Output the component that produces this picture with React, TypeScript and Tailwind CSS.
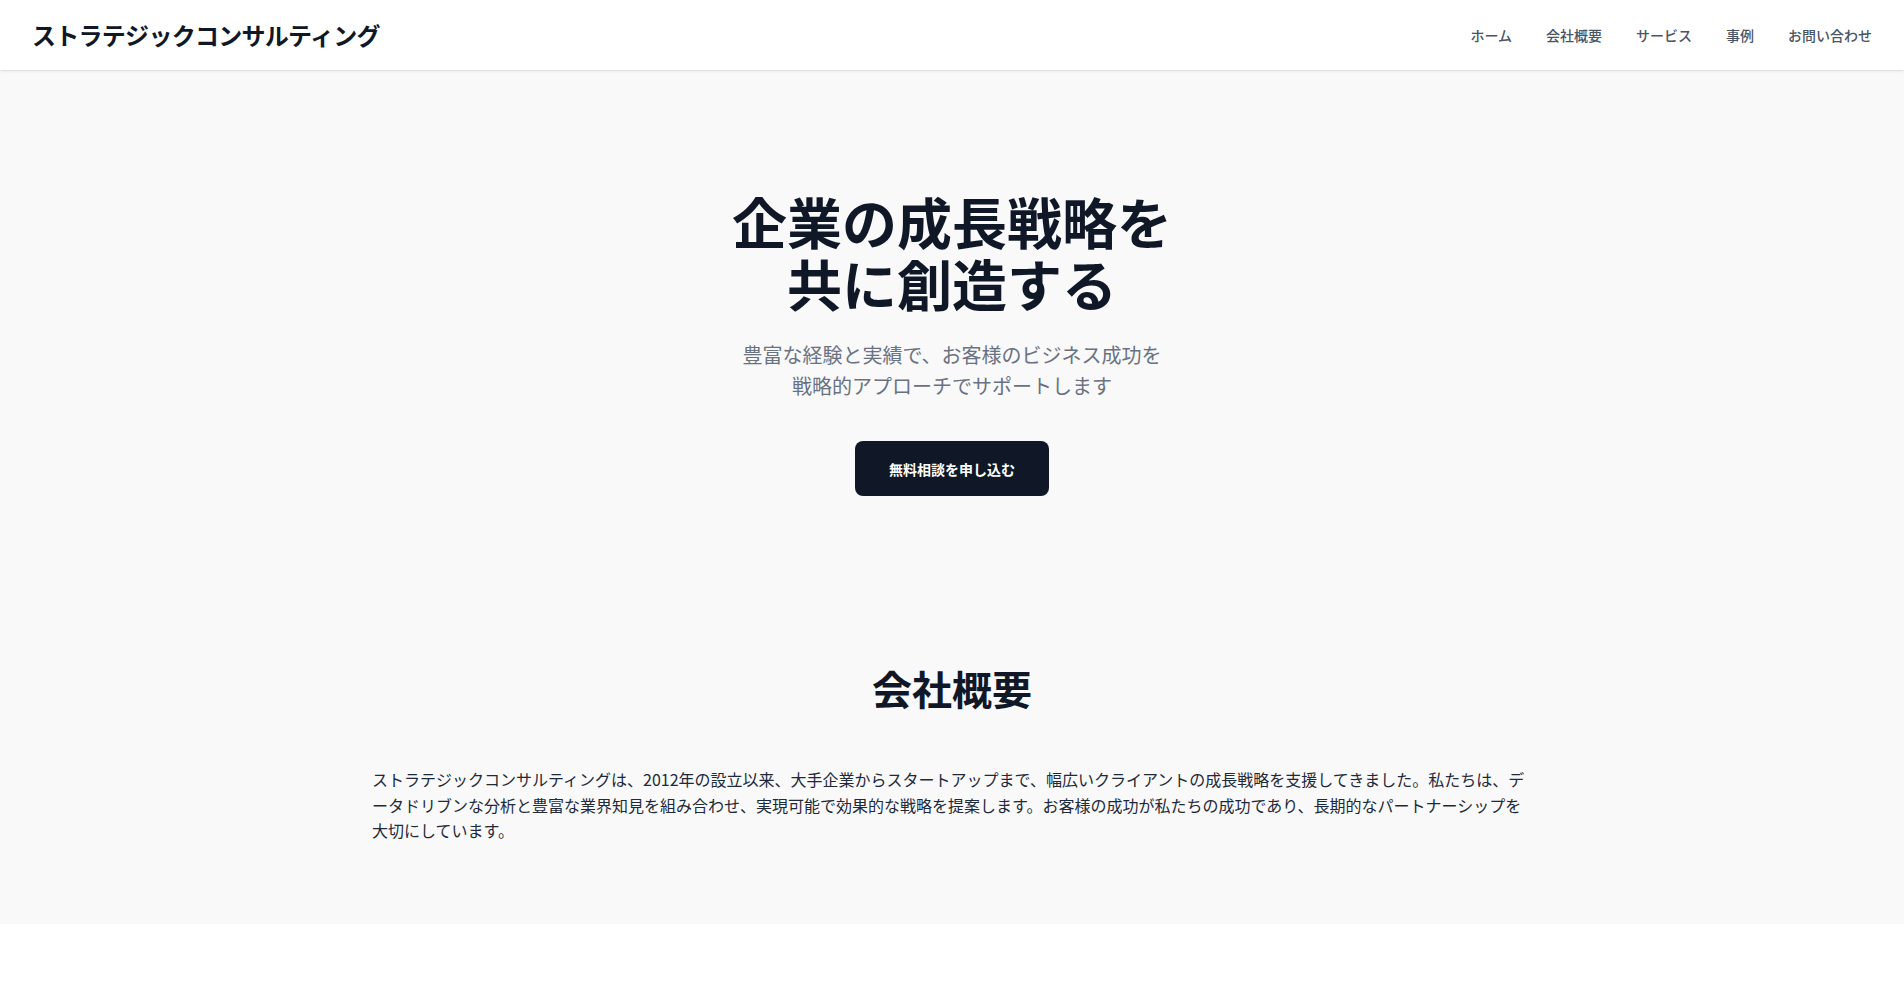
const navItems = ["ホーム", "会社概要", "サービス", "事例", "お問い合わせ"];

const Header = () => {
  return (
    <header className="bg-white shadow-sm relative z-10">
      <div className="h-[70px] px-8 flex items-center justify-between">
        <a href="#" className="text-2xl font-bold text-gray-900 tracking-[-0.03em]">
          ストラテジックコンサルティング
        </a>
        <nav className="flex items-center gap-[34px] pl-0.5">
          {navItems.map((item) => (
            <a key={item} href="#" className="text-sm font-medium text-gray-600">
              {item}
            </a>
          ))}
        </nav>
      </div>
    </header>
  );
};

const Hero = () => {
  return (
    <section className="pt-[119px] pb-[88px] text-center">
      <h1 className="text-[55px] leading-[62px] font-bold text-gray-900">
        企業の成長戦略を
        <br />
        共に創造する
      </h1>
      <p className="mt-[26px] text-xl leading-[31px] text-gray-500">
        豊富な経験と実績で、お客様のビジネス成功を
        <br />
        戦略的アプローチでサポートします
      </p>
      <button className="mt-[40px] h-[55px] px-[34px] rounded-lg bg-gray-900 text-white text-sm font-bold">
        無料相談を申し込む
      </button>
    </section>
  );
};

const About = () => {
  return (
    <section className="pt-20 pb-[80px]">
      <div className="max-w-[1160px] mx-auto">
        <h2 className="text-[40px] leading-[48px] font-bold text-gray-900 text-center">
          会社概要
        </h2>
        <p className="mt-[55px] text-base leading-[25.6px] text-gray-800">
          ストラテジックコンサルティングは、2012年の設立以来、大手企業からスタートアップまで、幅広いクライアントの成長戦略を支援してきました。私たちは、データドリブンな分析と豊富な業界知見を組み合わせ、実現可能で効果的な戦略を提案します。お客様の成功が私たちの成功であり、長期的なパートナーシップを大切にしています。
        </p>
      </div>
    </section>
  );
};

export default function App() {
  return (
    <div className="min-h-screen bg-white font-['Noto_Sans_CJK_JP','Noto_Sans',sans-serif]">
      <Header />
      <main className="bg-[#f9f9f9]">
        <Hero />
        <About />
      </main>
    </div>
  );
}
